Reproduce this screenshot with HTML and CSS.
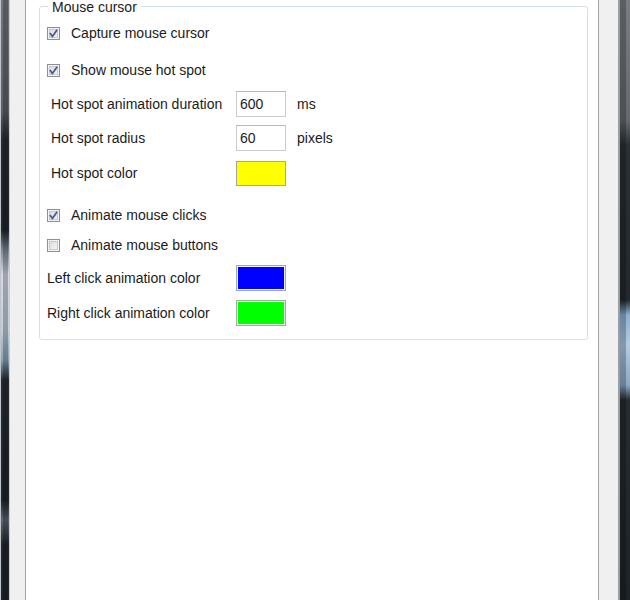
FILE: index.html
```html
<!DOCTYPE html>
<html lang="en">
<head>
<meta charset="utf-8">
<title>Mouse cursor options</title>
<link rel="stylesheet" href="styles.css">
</head>
<body>
<div class="window">
  <div class="frame frame-left"></div>
  <div class="chrome chrome-left"></div>
  <main class="panel">
    <section class="groupbox">
      <span class="legend">Mouse cursor</span>

      <div class="row check-row">
        <span class="cb checked"><svg viewBox="0 0 11 11" width="11" height="11"><path d="M2.3 5.6 L4.4 8.6 L8.8 2.2" /></svg></span>
        <span class="label">Capture mouse cursor</span>
      </div>

      <div class="row check-row sp-11">
        <span class="cb checked"><svg viewBox="0 0 11 11" width="11" height="11"><path d="M2.3 5.6 L4.4 8.6 L8.8 2.2" /></svg></span>
        <span class="label">Show mouse hot spot</span>
      </div>

      <div class="row field-row indent sp-8">
        <span class="label">Hot spot animation duration</span>
        <span class="textbox">600</span>
        <span class="unit">ms</span>
      </div>

      <div class="row field-row indent sp-8">
        <span class="label">Hot spot radius</span>
        <span class="textbox">60</span>
        <span class="unit">pixels</span>
      </div>

      <div class="row field-row indent sp-9">
        <span class="label">Hot spot color</span>
        <span class="swatch swatch-yellow"></span>
      </div>

      <div class="row check-row sp-16">
        <span class="cb checked"><svg viewBox="0 0 11 11" width="11" height="11"><path d="M2.3 5.6 L4.4 8.6 L8.8 2.2" /></svg></span>
        <span class="label">Animate mouse clicks</span>
      </div>

      <div class="row check-row sp-4">
        <span class="cb"></span>
        <span class="label">Animate mouse buttons</span>
      </div>

      <div class="row field-row sp-7">
        <span class="label">Left click animation color</span>
        <span class="swatch swatch-blue"></span>
      </div>

      <div class="row field-row sp-9">
        <span class="label">Right click animation color</span>
        <span class="swatch swatch-green"></span>
      </div>
    </section>
  </main>
  <div class="chrome chrome-right"></div>
  <div class="frame frame-right"></div>
</div>
</body>
</html>
```

FILE: styles.css
```css
html, body {
  margin: 0;
  padding: 0;
  background: #ffffff;
}

body {
  font-family: "Liberation Sans", Arial, sans-serif;
  font-size: 14px;
  line-height: 16px;
  color: #1b1b1b;
}

.window {
  display: flex;
  width: 630px;
  height: 600px;
  overflow: hidden;
}

/* dark glass window frame */
.frame {
  flex: none;
  height: 100%;
}

.frame-left {
  width: 10px;
  background:
    linear-gradient(to right, #bfc2c6 0, #bfc2c6 1px, rgba(0,0,0,0) 1px, rgba(0,0,0,0) 3px, rgba(0,0,0,0.25) 3px, rgba(0,0,0,0.25) 8px, rgba(0,0,0,0) 8px, rgba(0,0,0,0) 9px, #c9ccd0 9px),
    linear-gradient(to bottom, #74787d 0, #5d6166 110px, #262b31 140px, #1f252b 230px, #7d8898 250px, #d6d9e2 275px, #c0cedd 330px, #8aa3bd 360px, #262c32 380px, #1e242a 500px, #5c6670 520px, #20262c 545px, #1e242a 600px);
}

.frame-right {
  width: 12px;
  background:
    linear-gradient(to right, #9a9ea2 0, #9a9ea2 2px, rgba(0,0,0,0.25) 2px, rgba(0,0,0,0.25) 8px, rgba(0,0,0,0) 8px),
    linear-gradient(to bottom, #7a7e82 0, #666a6f 120px, #2a3036 145px, #22282e 300px, #8fb0d2 315px, #b3cbe3 345px, #8fa9c4 385px, #262c32 400px, #1d2329 600px);
}

.chrome {
  flex: none;
  height: 100%;
  background: #f0f0f0;
}

.chrome-left {
  width: 15px;
}

.chrome-right {
  width: 19px;
}

.panel {
  flex: none;
  width: 572px;
  height: 100%;
  border-left: 1px solid #a3a3a3;
  border-right: 1px solid #a3a3a3;
  background: #ffffff;
}

/* group box */
.groupbox {
  position: relative;
  box-sizing: border-box;
  width: 549px;
  height: 334px;
  margin: 6px 0 0 13px;
  padding: 13px 7px 12px 7px;
  border: 1px solid #d5dfe5;
  border-radius: 3px;
  display: flex;
  flex-direction: column;
}

.legend {
  position: absolute;
  top: -7px;
  left: 8px;
  padding: 0 4px;
  line-height: 14px;
  background: #ffffff;
  white-space: nowrap;
}

.row {
  display: flex;
  align-items: center;
  height: 26px;
  flex: none;
}

.sp-4 { margin-top: 4px; }
.sp-7 { margin-top: 7px; }
.sp-8 { margin-top: 8px; }
.sp-9 { margin-top: 9px; }
.sp-11 { margin-top: 11px; }
.sp-16 { margin-top: 16px; }

.label {
  white-space: nowrap;
}

/* checkboxes */
.check-row .label {
  margin-left: 11px;
}

.cb {
  box-sizing: border-box;
  width: 13px;
  height: 13px;
  border: 1px solid #8e8f8f;
  background: linear-gradient(135deg, #d3d6da 0%, #e9eaec 55%, #f8f8f8 100%);
  box-shadow: inset 0 0 0 1px #f3f3f3, inset 0 0 0 2px #c6cacf;
  display: flex;
  align-items: center;
  justify-content: center;
  flex: none;
  margin-top: 1px;
}

.cb svg path {
  fill: none;
  stroke: #4b5a94;
  stroke-width: 1.8;
  stroke-linecap: round;
  stroke-linejoin: round;
}

/* label + control rows */
.field-row .label {
  width: 189px;
  flex: none;
}

.field-row.indent .label {
  width: 185px;
  margin-left: 4px;
}

.textbox {
  box-sizing: border-box;
  width: 50px;
  height: 26px;
  padding: 4px 3px;
  border: 1px solid #c9cbcf;
  border-top-color: #b7babe;
  background: #ffffff;
  line-height: 16px;
  flex: none;
}

.unit {
  margin-left: 11px;
}

.swatch {
  box-sizing: border-box;
  width: 50px;
  height: 26px;
  flex: none;
  border: 1px solid #a3a6aa;
}

.swatch-yellow {
  background: #ffff00;
  height: 25px;
}

.swatch-blue {
  background: #0000ff;
  border-color: #9aa8c8;
  box-shadow: inset 0 0 0 1px #eef1f8;
}

.swatch-green {
  background: #00ff00;
  border-color: #a4a8a6;
  box-shadow: inset 0 0 0 1px #e6f5e6;
}
```
